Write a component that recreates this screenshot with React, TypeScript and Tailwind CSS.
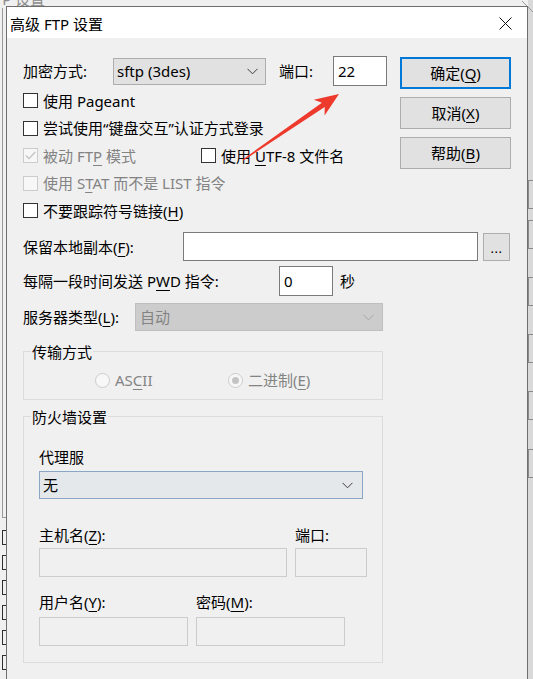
import React from "react";

const U = ({ children }: { children: React.ReactNode }) => (
  <span className="underline decoration-1 underline-offset-[3px]">{children}</span>
);

const Chevron = ({ color = "#3c3c3c" }: { color?: string }) => (
  <svg width="11" height="7" viewBox="0 0 11 7" className="shrink-0">
    <polyline points="0.5,0.8 5.5,5.8 10.5,0.8" fill="none" stroke={color} strokeWidth="1" />
  </svg>
);

const Check = ({ disabled, checked }: { disabled?: boolean; checked?: boolean }) => (
  <div
    className={
      "w-[15px] h-[15px] shrink-0 border flex items-center justify-center " +
      (disabled ? "border-[#cccccc] bg-[#f7f7f7]" : "border-[#333333] bg-white")
    }
  >
    {checked && (
      <svg width="11" height="9" viewBox="0 0 11 9">
        <polyline points="0.8,4.5 4,7.6 10.2,1" fill="none" stroke="#c2c2c2" strokeWidth="1.3" />
      </svg>
    )}
  </div>
);

const Radio = ({ checked }: { checked?: boolean }) => (
  <div className="w-[15px] h-[15px] shrink-0 rounded-full border border-[#cccccc] bg-[#f7f7f7] flex items-center justify-center">
    {checked && <div className="w-[7px] h-[7px] rounded-full bg-[#c4c4c4]" />}
  </div>
);

const Btn = ({ children, primary }: { children: React.ReactNode; primary?: boolean }) => (
  <div
    className={
      "w-[111px] h-[32px] flex items-center justify-center bg-[#e1e1e1] " +
      (primary ? "border-2 border-[#0078d7]" : "border border-[#adadad]")
    }
  >
    {children}
  </div>
);

const DisabledInput = ({ w }: { w: string }) => (
  <div className={w + " h-[29px] border border-[#cccccc] bg-[#f0f0f0]"} />
);

export default function App() {
  return (
    <div className="relative w-[533px] h-[679px] overflow-hidden bg-[#f0f0f0] font-['Noto_Sans','Noto_Sans_CJK_SC',sans-serif] text-[15px] leading-[20px] text-black">
      {/* underlying window pieces */}
      <div className="absolute left-[-14px] top-[-11px] text-[15px] text-[#8c8c8c]">FTP 设置</div>
      <div className="absolute left-[2px] top-[8px] w-[1px] h-[510px] bg-[#9a9a9a]" />
      <div className="absolute left-[2px] top-[517px] w-[4px] h-[1px] bg-[#9a9a9a]" />
      {[530, 555, 580, 605, 630, 655].map((y) => (
        <div
          key={y}
          className="absolute left-[2px] w-[6px] h-[15px] border border-[#2e2e2e]"
          style={{ top: y }}
        />
      ))}
      <div className="absolute left-[528px] top-0 w-[5px] h-[679px] bg-[#d9d9d9]" />
      {[180, 220, 277, 334, 391, 449].map((y) => (
        <div
          key={y}
          className="absolute left-[528px] w-[8px] h-[29px] border border-[#8a8a8a]"
          style={{ top: y }}
        />
      ))}
      <svg className="absolute left-[522px] top-[0px]" width="11" height="14" viewBox="0 0 11 14">
        <line x1="0" y1="1" x2="11" y2="12" stroke="#9a9a9a" strokeWidth="1" />
      </svg>

      {/* dialog window */}
      <div className="absolute left-[6px] top-[6px] w-[522px] h-[700px] border border-[#6f6f6f] bg-[#f0f0f0] flex flex-col">
        <div className="h-[31px] bg-white flex items-center justify-between pl-[3px] pr-[15px] shrink-0">
          <span className="text-[15px] mt-[2px]">高级 FTP 设置</span>
          <svg width="13" height="13" viewBox="0 0 13 13" className="mt-[2px]">
            <line x1="0.5" y1="0.5" x2="12.5" y2="12.5" stroke="#111" strokeWidth="1" />
            <line x1="12.5" y1="0.5" x2="0.5" y2="12.5" stroke="#111" strokeWidth="1" />
          </svg>
        </div>

        <div className="pl-[16px] pt-[18px] flex flex-col">
          {/* top section */}
          <div className="flex">
            <div className="w-[364px] flex flex-col">
              <div className="h-[30px] flex items-center">
                <span className="w-[90px]">加密方式:</span>
                <div className="w-[153px] h-[27px] bg-[#e1e1e1] border border-[#adadad] flex items-center justify-between pl-[3px] pr-[7px]">
                  <span>sftp (3des)</span>
                  <Chevron />
                </div>
                <span className="ml-[13px] w-[54px]">端口:</span>
                <div className="w-[54px] h-[30px] bg-white border border-[#7a7a7a] flex items-center pl-[4px]">22</div>
              </div>
              <div className="mt-[1px] h-[27.5px] flex items-center">
                <Check />
                <span className="ml-[5px]">使用 Pageant</span>
              </div>
              <div className="h-[27.5px] flex items-center">
                <Check />
                <span className="ml-[5px]">尝试使用“键盘交互”认证方式登录</span>
              </div>
              <div className="h-[27.5px] flex items-center">
                <div className="w-[178px] flex items-center">
                  <Check disabled checked />
                  <span className="ml-[5px] text-[#838383]">
                    被动 FT<U>P</U> 模式
                  </span>
                </div>
                <Check />
                <span className="ml-[5px]">
                  使用 <U>U</U>TF-8 文件名
                </span>
              </div>
              <div className="h-[27.5px] flex items-center">
                <Check disabled />
                <span className="ml-[5px] text-[#838383]">
                  使用 S<U>T</U>AT 而不是 LIST 指令
                </span>
              </div>
              <div className="h-[27.5px] flex items-center">
                <Check />
                <span className="ml-[5px]">
                  不要跟踪符号链接(<U>H</U>)
                </span>
              </div>
            </div>
            <div className="ml-[13px] pt-[1px] flex flex-col gap-[8px]">
              <Btn primary>
                <span>
                  确定(<U>Q</U>)
                </span>
              </Btn>
              <Btn>
                <span>
                  取消(<U>X</U>)
                </span>
              </Btn>
              <Btn>
                <span>
                  帮助(<U>B</U>)
                </span>
              </Btn>
            </div>
          </div>

          {/* local copy */}
          <div className="mt-[7.5px] h-[29px] flex items-center">
            <span className="w-[160px]">
              保留本地副本(<U>F</U>):
            </span>
            <div className="w-[295px] h-[29px] bg-white border border-[#7a7a7a]" />
            <div className="ml-[5px] w-[27px] h-[28px] bg-[#e1e1e1] border border-[#adadad] flex items-center justify-center">
              <span className="text-[13px] leading-none mt-[4px] tracking-[0.5px]">...</span>
            </div>
          </div>

          {/* PWD */}
          <div className="mt-[5px] h-[30px] flex items-center">
            <span className="w-[256px]">
              每隔一段时间发送 P<U>W</U>D 指令:
            </span>
            <div className="w-[54px] h-[30px] bg-white border border-[#7a7a7a] flex items-center pl-[4px]">0</div>
            <span className="ml-[7px]">秒</span>
          </div>

          {/* server type */}
          <div className="mt-[7px] h-[28px] flex items-center">
            <span className="w-[112px]">
              服务器类型(<U>L</U>):
            </span>
            <div className="w-[248px] h-[28px] bg-[#cccccc] border border-[#bfbfbf] flex items-center justify-between pl-[4px] pr-[8px]">
              <span className="text-[#838383]">自动</span>
              <Chevron color="#a6a6a6" />
            </div>
          </div>

          {/* transfer mode */}
          <div className="mt-[20px] w-[360px] h-[49px] border border-[#dcdcdc] relative pt-[18px] pl-[71px]">
            <span className="absolute left-[7px] top-[-10px] px-[1px] bg-[#f0f0f0]">传输方式</span>
            <div className="h-[20px] flex items-center">
              <div className="w-[133px] flex items-center">
                <Radio />
                <span className="ml-[5px] text-[#838383]">
                  AS<U>C</U>II
                </span>
              </div>
              <Radio checked />
              <span className="ml-[5px] text-[#838383]">
                二进制(<U>E</U>)
              </span>
            </div>
          </div>

          {/* firewall */}
          <div className="mt-[16px] w-[360px] h-[247px] border border-[#dcdcdc] relative pt-[30px] pl-[15px] flex flex-col">
            <span className="absolute left-[7px] top-[-10px] px-[1px] bg-[#f0f0f0]">防火墙设置</span>
            <span className="h-[20px]">代理服</span>
            <div className="mt-[4px] w-[324px] h-[28px] bg-[#e5e8eb] border border-[#8aa6c4] flex items-center justify-between pl-[3px] pr-[9px]">
              <span>无</span>
              <Chevron />
            </div>
            <div className="mt-[26px] h-[20px] flex">
              <span className="w-[256px]">
                主机名(<U>Z</U>):
              </span>
              <span>端口:</span>
            </div>
            <div className="mt-[3px] flex gap-[8px]">
              <DisabledInput w="w-[248px]" />
              <DisabledInput w="w-[72px]" />
            </div>
            <div className="mt-[15px] h-[20px] flex">
              <span className="w-[157px]">
                用户名(<U>Y</U>):
              </span>
              <span>
                密码(<U>M</U>):
              </span>
            </div>
            <div className="mt-[5px] flex gap-[8px]">
              <DisabledInput w="w-[149px]" />
              <DisabledInput w="w-[149px]" />
            </div>
          </div>
        </div>
      </div>

      {/* red annotation arrow */}
      <svg className="absolute left-0 top-0 pointer-events-none" width="533" height="679" viewBox="0 0 533 679">
        <polygon
          points="243.4,160.5 324.7,106.9 324.6,115.4 339,94 313.8,99.8 321.9,102.7 242.6,159.5"
          fill="#ee3a2c"
        />
      </svg>
    </div>
  );
}
